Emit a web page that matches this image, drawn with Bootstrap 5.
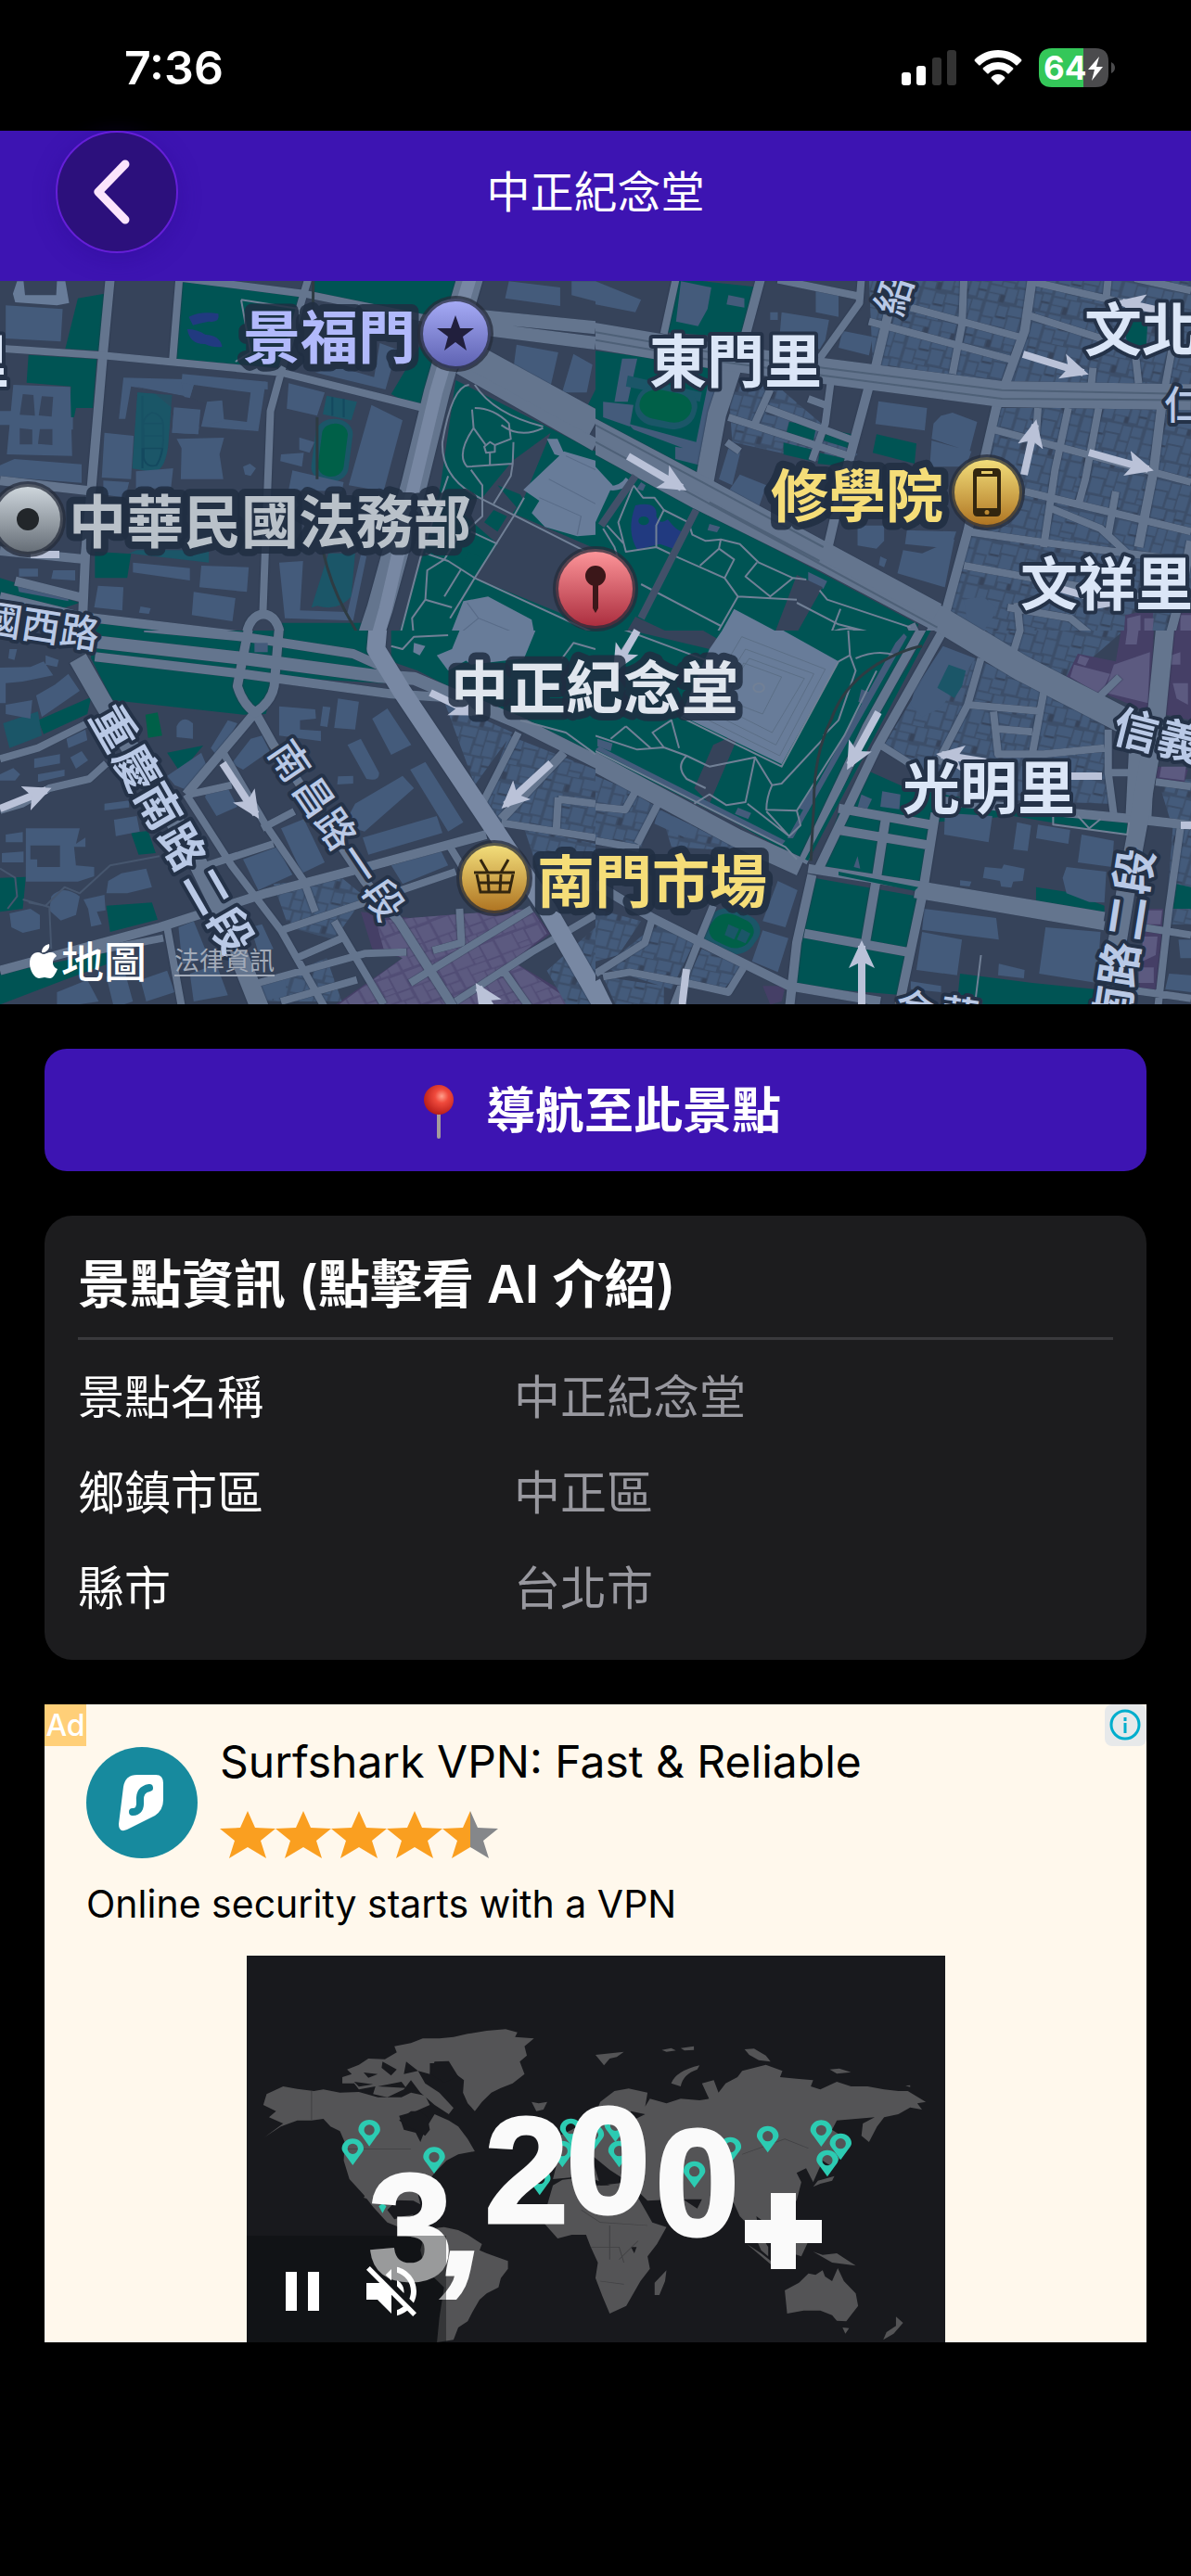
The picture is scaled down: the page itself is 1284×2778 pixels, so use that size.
<!DOCTYPE html>
<html lang="zh-Hant">
<head>
<meta charset="utf-8">
<meta name="viewport" content="width=device-width, initial-scale=1">
<title>中正紀念堂</title>
<link href="https://cdn.jsdelivr.net/npm/bootstrap@5.3.0/dist/css/bootstrap.min.css" rel="stylesheet">
<style>
  body { background: #000; color: #fff; font-family: Inter, "Noto Sans CJK TC", sans-serif; }
  svg { display: block; }
  .statusbar { height: 141px; padding: 0 82px 0 134px; }
  .clock { font-size: 50px; line-height: 60px; font-weight: 600; padding-top: 4px; }
  .status-icons { gap: 18px; padding-top: 4px; }
  .topbar { height: 162px; background: #3d14b2; padding: 0 60px 30px; }
  .topbar-side { width: 132px; }
  .back-btn { width: 132px; height: 132px; border-radius: 50%; background: #2c107c; border: 2px solid #651fd8; padding: 0 8px 0 0; box-shadow: 0 6px 24px rgba(40, 10, 140, .35); }
  .topbar h1 { font-size: 47px; line-height: 60px; font-weight: 400; }
  .map-view { background: #36435a; }
  .map-view > svg { width: 100%; height: auto; }
  .map-credit { position: absolute; left: 32px; bottom: 16px; gap: 30px; }
  .map-brand { font-size: 46px; line-height: 60px; font-weight: 500; gap: 3px; }
  .map-legal { font-size: 27px; line-height: 30px; color: #a3abb9; text-underline-offset: 5px; }
  .map-legal:hover { color: #fff; }
  .land { fill: #36435a; }
  .park { fill: #005454; }
  .pitch { fill: #1b5668; }
  .grass { fill: #006048; }
  .pond { fill: #213a80; }
  .bld { fill: #445b7b; }
  .mon { fill: #687c99; }
  .shop { fill: #453f66; }
  .shopb { fill: #5c5a80; }
  .road, .trail { fill: none; vector-effect: non-scaling-stroke; stroke-linejoin: round; }
  .road { stroke: #64758e; stroke-width: 10px; }
  .r8 { stroke-width: 8px; }
  .r14 { stroke-width: 14px; }
  .r20 { stroke-width: 20px; }
  .r28 { stroke-width: 28px; }
  .ave { stroke: #7888a3; }
  .trail { stroke: #718096; stroke-width: 2px; }
  .seam { stroke: #4e6077; }
  .rail { stroke: #2e3b42; stroke-width: 3px; }
  .net { filter: drop-shadow(0 0 2px #27344a); }
  .arrows path { fill: none; stroke: #bac2d8; stroke-width: 8px; }
  .poi { font-size: 62px; font-weight: 700; font-family: "Noto Sans CJK TC", sans-serif; fill: #dbe6f7; stroke: #243248; stroke-width: 8px; stroke-linejoin: round; paint-order: stroke; }
  .halo { stroke-width: 16px; stroke: #202e42; stroke-opacity: .85; }
  .street { font-size: 42px; font-weight: 500; fill: #b9c9e6; }
  .street-lg { font-size: 48px; fill: #b9c9e6; }
  .content { padding: 48px; gap: 48px; }
  .go-btn { height: 132px; border-radius: 24px; background: #3d14b2; color: #fff; border: 0; font-size: 53px; font-weight: 700; gap: 34px; padding: 3px 0 0 14px; }
  .info-panel { background: #1c1c1e; border-radius: 30px; padding: 36px; height: 479px; }
  .info-panel h2 { font-size: 56px; line-height: 76px; font-weight: 600; margin: 0; padding-bottom: 19px; border-bottom: 3px solid #39393c; }
  .info-list { margin: 11px 0 0; font-size: 50px; line-height: 103px; }
  .info-list dt { font-weight: 400; width: 470px; }
  .info-list dd { margin: 0; color: #98989f; }
  .promo { background: #fff8ec; color: #000; }
  .promo-tag { position: absolute; left: 0; top: 0; width: 45px; height: 45px; background: #ffcf78; color: #fff; font-size: 32px; line-height: 45px; font-weight: 500; text-align: center; }
  .promo-info { position: absolute; right: 0; top: 0; width: 45px; height: 45px; border-radius: 8px; background: #e7e9ea; border: 0; padding: 5px; }
  .promo-head { padding: 34px 45px 0; gap: 24px; }
  .promo-logo { margin-top: 12px; }
  .promo h3 { font-size: 48px; line-height: 56px; font-weight: 400; margin: 0 0 25px; }
  .promo p { font-size: 41px; line-height: 50px; margin: 0; padding: 24px 45px 31px; }
  .video-box { width: 753px; background: #18191d; }
  .video-controls { position: absolute; left: 0; bottom: 0; width: 215px; height: 115px; background: rgba(8, 9, 12, .4); padding: 4px 32px 0 42px; }
  .video-controls button { background: none; border: 0; padding: 0; }
  .digits { font-family: "Liberation Sans", sans-serif; font-weight: 700; font-size: 164px; fill: #fafafa; stroke: #fafafa; stroke-width: 3px; }
</style>
</head>
<body>

<header>
  <div class="statusbar d-flex align-items-center justify-content-between">
    <div class="clock">7:36</div>
    <div class="status-icons d-flex align-items-center">
      <svg width="60" height="38" viewBox="0 0 60 38"><g fill="#fff"><rect x="0" y="24" width="10" height="14" rx="3"/><rect x="16" y="17" width="10" height="21" rx="3"/></g><g fill="#333"><rect x="33" y="8" width="10" height="30" rx="3"/><rect x="49" y="0" width="10" height="38" rx="3"/></g></svg>
      <svg width="52" height="38" viewBox="0 0 52 38" fill="#fff"><path d="M26 0C36 0 45 4 51 10q1 1 0 2l-4 4q-1 1-2 0C40 11 33 8 26 8S12 11 7 16q-1 1-2 0l-4-4q-1-1 0-2C7 4 16 0 26 0z"/><path d="M26 13c7 0 12 3 16 6q1 1 0 2l-4 4q-1 1-2 0c-3-3-6-4-10-4s-7 1-10 4q-1 1-2 0l-4-4q-1-1 0-2c4-3 9-6 16-6z"/><path d="M26 26c3 0 5 1 7 3q1 1 0 2l-6 6q-1 1-2 0l-6-6q-1-1 0-2c2-2 4-3 7-3z"/></svg>
      <svg width="82" height="42" viewBox="0 0 82 42"><path fill="#4b4b4d" d="M48 0h13q14 0 14 14v14q0 14-14 14H48z"/><path fill="#34c759" d="M48 0H14Q0 0 0 14v14q0 14 14 14h34z"/><path fill="#4b4b4d" d="M78 15q4 2 4 6t-4 6z"/><text x="5" y="34" font-family="Inter, sans-serif" font-weight="700" font-size="35" fill="#fff">64</text><path fill="#fff" d="M65 9L53 23h7l-3 12 12-15h-7z"/></svg>
    </div>
  </div>
  <nav class="topbar d-flex align-items-center justify-content-between" aria-label="導覽">
    <div class="topbar-side">
      <button type="button" class="back-btn d-flex align-items-center justify-content-center" aria-label="返回">
        <svg width="48" height="76" viewBox="0 0 48 76"><path d="M37 8L8 38l29 30" fill="none" stroke="#fbe4fc" stroke-width="9" stroke-linecap="round" stroke-linejoin="round"/></svg>
      </button>
    </div>
    <h1 class="m-0">中正紀念堂</h1>
    <div class="topbar-side"></div>
  </nav>
</header>

<section class="map-view position-relative overflow-hidden">
<svg viewBox="0 0 1284 780" role="img" aria-label="地圖">
  <defs>
    <pattern id="houses" width="170" height="150" patternUnits="userSpaceOnUse" patternTransform="rotate(14)">
      <rect width="170" height="150" fill="#3c4e69"/>
      <path class="bld" d="M4 4h32v44H4zM40 8h24v34H40zM68 4h40v28H68zM112 6h22v46h-22zM138 4h26v30h-26zM4 54h26v38H4zM34 48h34v26H34zM72 38h32v48H72zM110 58h24v30h-24zM138 40h28v46h-28zM4 98h40v22H4zM4 124h28v22H4zM34 80h30v14H34zM50 98h26v44H50zM80 94h36v30H80zM84 128h24v18H84zM122 96h20v46h-20zM146 92h20v24h-20zM148 122h18v24h-18z"/>
      <path class="land" d="M36 122h12v24H36zM112 36l0 0zM110 126h10v20h-10zM40 42h24v6H40zM144 116h22v5h-22z"/>
    </pattern>
    <pattern id="shops" width="130" height="120" patternUnits="userSpaceOnUse" patternTransform="rotate(-24)">
      <rect width="130" height="120" fill="#514d75"/>
      <path class="shopb" d="M3 3h48v50H3zM55 3h30v34H55zM90 6h36v48H90zM3 58h26v56H3zM33 58h50v24H33zM56 41h28v13H56zM34 86h32v28H34zM70 88h24v28H70zM90 60h34v24H90zM98 90h28v26H98z"/>
    </pattern>
    <linearGradient id="gViolet" x2="0" y2="1"><stop stop-color="#a8adf8"/><stop offset="1" stop-color="#5c60b0"/></linearGradient>
    <linearGradient id="gGold" x2="0" y2="1"><stop stop-color="#f5e27e"/><stop offset="1" stop-color="#ad711f"/></linearGradient>
    <linearGradient id="gGrey" x2="0" y2="1"><stop stop-color="#d2dae0"/><stop offset="1" stop-color="#626a73"/></linearGradient>
    <linearGradient id="gRed" x2="0" y2="1"><stop stop-color="#ff989c"/><stop offset="1" stop-color="#a92b3c"/></linearGradient>
    <marker id="tip" markerUnits="userSpaceOnUse" markerWidth="32" markerHeight="32" refX="24" refY="16" orient="auto"><path d="M0 2l30 14L0 30l7-14z" style="fill:#bac2d8;stroke:none"/></marker>
  </defs>

  <!-- north-west -->
  <svg x="0" y="-13" width="642" height="400" viewBox="0 0 1568 1200" preserveAspectRatio="none">
    <path class="park" d="M205 95L275 80 262 265 172 258zM75 278L255 292 245 450H200L195 480H182L187 380 70 368zM480 40L800 85 740 320 462 292zM830 30H1205L1190 170 1000 130 820 80zM1105 250L1140 300 1110 460 1030 405zM1200 360L1568 590V1200H1045L1115 920 1160 700zM250 915L345 922 335 1000H250zM0 1000L210 1080 160 1100 0 1060zM215 1140L640 1195V1200H215zM720 1145H970L960 1200H735zM1540 460H1568V390z"/>
    <path class="land" d="M1450 530L1380 740 1350 790 1568 905V1160L1250 1000 1310 890 1190 760 1270 740 1350 620z"/>
    <path class="park" d="M1300 780L1335 800 1310 850 1275 820zM1235 915L1278 940 1250 990 1215 965zM1310 700L1370 730 1400 800 1370 785z"/>
    <path class="pitch" d="M362 400L453 408 442 580Q432 660 400 656L348 646zM860 410L940 430 925 490 850 470zM865 920H935L925 1060Q890 1110 835 1090L820 1096zM360 910H550V950L340 920z"/>
    <path d="M375 410V645M400 465Q372 480 378 520V610Q385 645 412 635 432 600 430 520 432 470 400 465zM378 500H430M378 540H430M378 580H425M875 415V475M905 420V480" fill="none" stroke="#14495f" stroke-width="5"/>
    <rect class="pitch" x="825" y="485" width="98" height="205" rx="48" transform="rotate(6 875 590)"/>
    <rect class="grass" x="842" y="500" width="68" height="172" rx="34" transform="rotate(6 875 590)"/>
    <path class="pond" d="M497 155Q530 135 575 145 580 175 550 170 530 175 508 182zM493 195Q520 195 540 212 580 215 585 252 560 255 540 243 500 245 493 195z"/>
    <path class="bld" d="M15 118L165 130 160 235 15 225zM35 375L185 382 190 605 18 600zM0 460H35V505H0zM170 480H192V520H170zM0 635L38 615 215 632V692L0 672zM325 352L700 364 680 525 530 510 545 440 585 430 580 485 650 495 660 400 510 375 500 415 345 380 330 485 313 485zM480 340L705 365V390L478 368zM458 448L528 455 522 535 453 530zM275 530L352 540 345 680 268 675zM465 550L590 546 578 600 588 680 476 680 478 580zM272 685L340 690 330 740 272 730zM358 655L456 645 450 710H358zM760 370L855 400 835 475 755 452zM978 440L1060 490 1010 720 918 700zM788 545L828 560 815 595 788 585zM740 600L800 595 795 640 738 622zM770 652L905 690 900 720 760 715zM1000 240L1045 260 1015 390 830 335 900 320 985 350zM350 950L500 968V1008L350 982zM530 960L655 965 650 1045 525 1030zM510 1045L620 1065 612 1140 505 1120zM258 1025L325 1030 322 1105 248 1095zM735 950L798 945 790 1105 915 1110 950 925 965 930 930 1138 750 1130zM1340 40L1475 60V120L1330 95zM1505 40H1568V105L1505 85zM1360 245L1470 270 1450 378 1350 340zM1510 275L1560 310 1545 400 1480 400zM640 640L658 630 674 645 660 670 645 665zM50 970H100V995H50zM140 975H198V1008L135 1003zM45 1018L180 1050V1075L50 1045zM370 1092L397 1098 392 1116 366 1112z"/>
    <path class="land" d="M60 405L88 408 92 475 52 472zM110 412L140 414 136 478 102 474zM52 515L85 520V568H52zM105 518H138V570L100 566zM355 380L500 415 545 440 530 510H510L400 395z" fill-opacity=".9"/>
    <path class="pitch" d="M362 400L453 408 442 580H352z" fill-opacity=".6"/>
    <path class="bld" d="M478 368L510 375 500 418 485 414zM458 448L528 455 522 535 453 530zM545 430L585 425 590 490 530 510z"/>
    <path class="mon" d="M45 40H62L66 85H148L150 40H172L182 110 150 118 40 108 34 80zM1485 590L1568 620V860L1520 865 1435 835 1400 790 1420 750 1378 715zM1440 550L1468 550 1490 610 1460 600zM1220 1075L1285 1060 1400 1135 1410 1200H1180z"/>
    <path d="M1490 605L1568 650M1445 680L1568 760M1420 740L1530 800 1520 860M1230 1080L1260 1130 1400 1200M1260 1130L1190 1200" fill="none" stroke="#586b87" stroke-width="3"/>
    <g class="net">
      <path class="road" d="M290 30L270 290 240 720 225 920 215 1200M0 685L235 718M0 912L215 938M40 1010L210 1062M0 1060L215 1125 660 1190 800 1205"/>
      <path class="road r8" d="M472 30L455 290M0 257L270 280 740 335 1115 450M480 30L800 80 1160 170M812 30L795 100 740 335 712 460 692 1120"/>
      <path class="road" d="M648 1200C650 1090 738 1090 738 1200"/>
      <path class="road r14" d="M1240 150L1568 190M1280 195L1568 240"/>
      <path class="road r14" d="M1210 320L1568 570"/>
      <path class="road r28" d="M1240 280L1568 500M1240 20L1150 400 1090 700 1000 1100 965 1230"/>
      <path class="road r14 ave" d="M1240 20L1148 400 1090 700 1015 1100 985 1230"/>
    </g>
    <path class="trail" d="M1235 375Q1190 380 1165 560 1160 680 1270 745L1568 930M1250 450Q1300 450 1340 500L1345 550 1303 570 1290 560 1275 575 1280 595 1303 592 1303 570M1247 515L1278 568M1243 455L1247 515Q1200 600 1230 640L1350 630 1352 560M1290 595V635M1240 650L1270 700V800L1200 880 1170 940 1125 975 1120 1070 1085 1130 1090 1200M1350 630L1345 670 1300 760M1380 740L1355 795 1250 1000 1185 1130M1120 920L1180 945 1250 1000 1568 1180M1180 670L1110 920 1050 1200M1240 850L1310 890M1250 375Q1300 470 1430 510M635 100L660 270 620 300M635 100L790 130M1320 505Q1370 550 1430 515M1215 970L1170 1060M1120 1070L1190 1095"/>
    <path class="trail rail" d="M825 40L822 320M835 480V680M850 910Q870 1020 910 1110L960 1220"/>
  </svg>

  <!-- north-east -->
  <svg x="642" y="-13" width="642" height="400" viewBox="0 0 1568 1200" preserveAspectRatio="none">
    <path fill="url(#houses)" d="M720 30H1568V380L1080 370 730 310zM1070 450H1568V1200H1000L930 1120zM350 380H480L690 600 650 640 360 560z"/>
    <path fill="url(#houses)" d="M1060 450H1568V900H1000z"/>
    <path class="park" d="M212 30L435 60 405 225 185 205zM0 265L355 320 270 680 0 490zM0 590L265 775 590 980 850 1150 840 1200H0zM510 495L582 508 572 565 500 545zM602 515L675 535 665 580 600 555zM495 562L572 585 565 620 495 600zM590 595L662 615 655 640 585 630zM740 535L845 565 840 630 730 595zM1390 180L1455 145 1450 255 1400 240z"/>
    <path class="pond" d="M105 765Q165 750 160 800 170 830 190 810 215 850 230 850L205 905 170 890 110 908Q80 850 105 765z"/>
    <circle class="park" cx="127" cy="815" r="14"/>
    <path class="bld" d="M0 40L120 100 105 140 0 115zM225 40L305 60 295 130 270 185 212 170zM350 85L392 95V125L345 115zM490 140L615 165 605 230 590 260 485 215zM580 70L640 80 640 155 580 140zM745 428L873 450 867 523 737 502zM910 475L940 465 1005 495 985 590 885 550 890 500zM885 555L990 590 975 640H880zM380 665L450 700 430 770 350 720zM690 830H760V880L740 905 690 895zM820 845L950 850 935 905 815 890zM810 910L860 920 945 875 920 1030 795 985zM750 930L767 940 760 965 746 958zM350 580L382 590 360 700 325 680zM460 140H480V165H460zM20 430L100 440 90 510 20 480zM70 290L110 290 85 430 50 430zM85 500L265 560 300 350 330 360 275 600 100 520zM650 200L730 220 720 280 640 255zM210 575L280 590 275 635 210 615zM120 690L132 700 125 718 108 712zM300 825L328 835 320 852 295 845zM560 980L610 1010 600 1035 560 1010zM970 1070L1020 1060 1060 1100 1020 1175 980 1150z"/>
    <path class="pitch" d="M85 345L280 400 275 430 80 380z"/>
    <rect class="pitch" x="105" y="378" width="162" height="136" rx="60" transform="rotate(14 186 446)"/>
    <rect class="grass" x="115" y="396" width="138" height="96" rx="46" transform="rotate(14 186 446)"/>
    <path class="mon" d="M0 640L45 700 0 820zM20 700Q60 710 80 675L95 690Q60 730 20 710zM365 1100L480 1175 470 1210H315z"/>
    <path class="land" d="M530 990L598 1030 520 1200H465zM105 1125L270 1220H60z"/>
    <path class="shop" d="M1395 1120L1470 1100 1460 1200H1390zM1530 1110L1568 1090V1200H1530z"/>
    <path class="shopb" d="M1400 1130L1435 1120V1190H1400zM1445 1130L1470 1130 1465 1190H1445zM1540 1120H1568V1190H1540z"/>
    <g class="net">
      <path class="road r8" d="M212 30L180 210M480 35L700 90M700 30L695 110 590 290M720 170L1100 295M830 125L1130 225M970 30L965 180 940 340M1145 40L1568 160M1350 30L1345 90M1140 150L1420 260 1430 370M1310 320L1305 380M1530 180L1500 380M1245 450L1210 650 1180 900M1325 450L1290 680 1270 770M1165 450L1160 540M1050 520L1568 690M1130 720L1568 850M1190 770L1330 840 1400 920M1370 720L1350 860M980 850L1150 880 1400 920 1568 945M970 960L1150 1000 1568 1090M1085 1095L1250 1130 1320 1200M620 360L605 500 570 620M450 450L690 560M350 480L680 610M460 390L420 500M560 420L605 440M345 560L380 590M1420 30L1568 70M1110 1080L1120 1200M1450 920L1440 1080"/>
      <path class="road" d="M435 30L385 260M770 150L735 330 720 380 650 700 612 900M1150 30L1130 200 1080 370 1055 450 980 850 920 1120M1490 450L1470 650 1430 900M830 1150L850 1200M900 1140L870 1200M1568 880L1540 1060 1510 1200"/>
      <path class="road r20" d="M360 320L320 470 285 700"/>
      <path class="road r28" d="M-10 215L330 285 600 330 1070 405 1568 415M-20 540L270 735 600 935 900 1130 1010 1210"/>
      <path class="road r20" d="M-20 505L280 700 900 1110"/>
    </g>
    <path class="trail seam" d="M0 205L330 275 600 320 1070 392 1568 405M0 230L330 300 600 345 1070 420 1568 425M0 505L600 900M0 560L600 960 900 1160M300 755L590 945"/>
    <path class="trail" d="M100 700L60 820 80 915 160 900 220 935 340 1000 375 1060 530 1070M100 700L125 740 155 740 180 780 245 820 255 860 290 880 330 875 380 890 430 950 520 1000 555 1005M180 780L160 830V900M330 875L325 905 275 960M325 905L365 940 340 1000M425 950L395 995 460 1060 520 1000M375 1060L310 1200M120 1020L330 1155M20 840L50 900 60 940M30 830L75 890M530 1080L640 1150 800 1200M645 1100L620 1180M590 1040L610 1070 830 1160M590 1200Q640 1150 690 1170L740 1200"/>
    <path class="road r8" style="stroke:#425069" d="M265 780L120 1130M105 670L15 830"/>
  </svg>

  <!-- south-west -->
  <svg x="0" y="377" width="642" height="410" viewBox="0 0 1568 1230" preserveAspectRatio="none">
    <rect class="land" width="1568" height="1230"/>
    <path class="park" d="M240 -10H980L1010 170 725 150 700 270 640 272 295 225 240 90zM1030 -10H1568V400L1370 300 1100 130 1030 100zM100 290L240 215 230 270 115 335zM440 395L535 372 475 460zM345 655L390 648 410 720 365 725zM280 890L400 880 415 935 290 975zM0 800L68 797 60 900 0 910zM0 1110L280 1040V1080L160 1135 0 1210z"/>
    <path class="shop" d="M950 910L1080 930 1400 900 1450 980 1350 1070 1568 1230H860L1060 1060 980 1030z"/>
    <path fill="url(#shops)" d="M990 940L1080 930 1400 900 1440 980 1350 1070 1540 1230H870L1060 1060 1010 1030z"/>
    <path fill="url(#houses)" d="M1340 340L1568 450V680L1320 620 1270 560zM1170 230L1350 330 1250 500zM720 820L900 800 960 860 880 1000 760 960zM1380 640L1568 690V900L1440 860zM680 1150L860 1060 900 1200H700zM1500 1230L1440 1100 1568 960V1230z"/>
    <path class="grass" d="M383 272L415 265 427 340 390 347z"/>
    <path class="pitch" d="M8 300L100 262 110 340 25 380z"/>
    <path class="bld" d="M0 120L80 118 115 100 140 145 60 165 15 170V235H0zM120 80L155 95 150 118 120 110zM95 210L145 175 180 140 210 195 110 280zM15 240L85 225 80 285 15 270zM90 415L158 400V430L90 445zM100 465L170 450V470L100 490zM175 350L225 320 230 355 180 380zM185 410L215 390 232 420 200 447zM0 465L35 445 53 465 40 485H0zM275 560L340 550V572L275 582zM300 612L360 600 368 650 305 665zM68 640H210L200 690 225 670V700H195L200 760 248 765V795L205 812H180L68 812zM15 660L60 652V685H15zM5 720L62 715V750H5zM320 785L385 770 400 830 335 850 280 850 285 810zM135 860Q165 820 210 860L200 920 160 938 130 905zM25 915L80 900 105 920V965L60 978 30 960zM220 870L275 855 278 905 255 910 268 950 240 958 232 900zM465 310Q480 270 508 300V350L465 345zM555 380L600 290 625 300 575 410zM735 245L830 255 832 285 790 290 790 320 845 325V358L735 340zM890 220L945 230 935 320 880 315zM850 245L870 248 862 312 843 308zM980 285L1020 252 1083 370 1030 402zM915 370L950 350 998 460Q1000 490 965 480zM935 560L1060 470 1090 510 960 650 905 630zM1080 450L1120 425 1220 620 1180 650zM955 670L1150 600 1165 655 970 725zM740 640L800 610 855 750 795 785zM890 472L930 470V495L888 498zM610 430L660 350 690 340 710 390 640 450zM545 510L600 510 625 570 570 600 540 540zM440 470L530 395 545 440 500 520 460 500zM370 1130L440 1100 460 1170 385 1200zM150 1170L230 1130 260 1200 150 1220zM470 960L510 940 550 1060 480 1080zM500 1110L570 1080 600 1180 510 1200zM660 960L690 950 720 1030 680 1040zM280 1120L330 1110 350 1200 300 1220zM640 740L730 700 770 790 680 840zM1030 760L1160 710 1180 760 1060 820zM670 1130L750 1120 755 1180 690 1200zM25 60L45 60 38 95 22 90z"/>
    <path class="land" d="M80 695H158V765H98V740H80z"/>
    <path class="mon" d="M1210 0H1410L1380 90 1240 110 1190 60zM1150 80L1200 55 1230 95 1180 130zM1090 40L1120 50 1105 80 1088 70z"/>
    <g class="net">
      <path class="road r8" d="M0 415L100 380 230 300M0 582L60 560 130 510 235 480 280 430M490 530L610 760 740 970 860 1230M500 530L610 500M590 400L700 630 800 810 830 910M440 960L480 1230M215 1045L430 995M520 770L720 690M690 640L775 585M740 970L960 880 1200 780M780 1060L910 990M680 1140L960 1045 1070 1040M740 1200L940 1130M880 940L1010 1210M1320 622L1568 670M1365 330L1270 560M1180 690L1240 810M1568 920L1400 1040 1200 1200M1080 1140L1400 900M1320 1090L1400 1230M1470 540L1465 640M1470 545L1568 560M1140 1035L1215 1010 1210 900"/>
      <path class="road" d="M0 1100L420 960 700 850 980 760 1280 660M672 265L490 530M672 265L720 370 960 810 1050 940 1200 1230M1485 395L1320 610"/>
      <path class="road" d="M655 -10L625 180Q640 240 672 265 715 230 722 180L735 -10M380 -10L640 20 930 75 1030 130M250 85L640 140 1030 205 1160 215"/>
      <path class="road r14" d="M240 35L640 90 1000 148 1090 155 1360 295 1580 430"/>
      <path class="road r20" d="M205 90L270 230 500 700 580 900 690 1240"/>
      <path class="road r20 ave" d="M995 -10L990 60 1060 200 1300 640 1440 900 1580 1200"/>
    </g>
    <path class="trail" style="stroke:#46566e" d="M60 870L130 895 135 1030M75 880L120 890 170 830 210 850 290 760 420 730M0 770L40 800 45 860 20 900"/>
    <path class="trail" d="M1030 50L1060 60 1090 20 1180 15M1480 90L1510 40 1568 60M1370 290L1490 330 1568 400"/>
    <path class="bld" d="M670 40H705V70H670z"/>
  </svg>

  <!-- south-east -->
  <svg x="642" y="377" width="642" height="410" viewBox="0 0 1568 1230" preserveAspectRatio="none">
    <rect class="land" width="1568" height="1230"/>
    <path fill="url(#houses)" d="M1020 -10H1400L1240 160 1340 310 1350 560 900 540 760 370 880 130 1000 90 1180 190zM1110 -10L1390 -10 1250 130zM0 470L80 510 160 570 120 700 0 680zM170 580L370 700 340 710 200 700zM0 900L120 940 60 1050 0 1070zM160 950L260 1010 200 1160 20 1090zM280 1030L390 1090 330 1170 240 1130zM20 1120L180 1150V1230H60zM1480 480H1568V950H1500L1520 640z"/>
    <path class="shop" d="M1385 -10H1470L1465 270 1240 150 1270 75 1370 100zM1520 -10H1568V290L1495 270zM1480 440L1560 450 1550 495 1475 480zM1450 900H1495L1480 1180H1430zM440 1150L500 1150 490 1200 460 1210z"/>
    <path class="shopb" d="M1400 0H1430L1425 45H1395zM1275 80L1300 90 1290 115 1268 105zM1260 110L1355 140 1330 210 1250 150zM1365 110L1460 70 1455 235 1340 200zM1515 80L1540 70V110H1515zM1520 170H1560V240L1530 220zM1490 440H1555L1550 485 1485 475zM1455 905H1492L1488 950H1450zM1440 990L1480 990 1475 1050 1440 1070zM1430 1090H1470V1140H1430z"/>
    <path class="park" d="M0 -10H860L790 200 540 740 350 610 0 400zM720 455L820 510 1200 590 1400 620V662L1100 600 890 620 650 580zM640 590L890 620 860 820 590 770zM575 800L850 860 810 1180 520 1150zM1160 830L1240 845 1340 890V915L1160 880zM870 845L1340 905 1330 925 880 860zM960 1110L1150 1140 1350 1165 1340 1230H950zM1530 820L1568 830V900H1520z"/>
    <path class="land" d="M60 -10H270L380 70 300 60zM310 370L380 330 300 560 260 510z"/>
    <path class="mon" d="M375 -75L480 -10 640 100 490 432 225 275 300 60z"/>
    <path class="bld" d="M915 50L1000 90 910 250 860 280 830 240 840 190zM920 590L1045 600 1035 685 918 660zM1110 620L1147 630 1138 713 1100 708zM1165 628L1250 645 1245 690 1160 672zM1280 660L1365 680 1360 765 1270 750zM1025 765L1070 770 1075 757 1130 770 1125 810 1100 812 1095 832 1068 828 1065 810 1020 800zM1240 765L1345 780 1340 880 1300 878 1240 850 1230 800zM865 900L1055 930 1062 1000 860 968zM860 975L965 1000 952 1115 845 1098zM1185 960L1330 975 1320 1140 1168 1110zM1062 1078L1130 1098 1128 1125 1060 1115zM480 810L532 840 500 960 440 940zM440 970L508 995 480 1105 412 1070zM165 580L255 630 235 670 155 625zM755 520L803 530 800 578 750 570zM700 530L728 545 715 578 690 572zM1535 1000H1568V1060H1540zM1510 1110L1568 1115V1170L1500 1160zM700 190L722 200 705 238 692 230zM375 573L410 590 402 610 367 593zM830 1135L910 1150V1170L830 1160zM960 808L990 812 985 828 960 825zM5 350L45 365 40 390 5 375zM570 510L585 515 560 585 535 575zM690 730L697 770 680 765z"/>
    <path class="pitch" d="M930 110L975 130 965 180 945 218 900 185z"/>
    <rect class="pitch" x="285" y="905" width="145" height="135" rx="55" transform="rotate(30 357 972)"/>
    <rect class="grass" x="300" y="922" width="115" height="98" rx="42" transform="rotate(30 357 972)"/>
    <path class="pitch" d="M350 950L378 965 365 1000 340 985zM385 965L408 980 395 1012 372 1000z"/>
    <g fill="none" stroke="#57697f" stroke-width="2"><path d="M385 20L605 125 485 405 265 270zM395 60L575 140 475 370 295 260zM405 90L550 155 465 330 320 240zM390 105L490 150 440 270 345 225z"/></g>
    <circle class="trail" cx="430" cy="185" r="14"/>
    <g class="net">
      <path class="road r8" d="M1015 90L980 240 900 430M1180 200L1150 400M750 370L840 440M980 240L1180 262M1048 262L1060 400 1180 400 1340 380M1060 318L1150 328M1350 320L1350 460 1365 600M1350 460L1430 460M1475 490L1568 505M165 560L110 690M0 680L115 705M310 890L270 1010 200 1230M0 570L78 580 110 510M0 1110L130 1010 150 930M20 1120L90 1105 240 1140 350 1170 390 1090M1540 640L1510 900 1480 1230M1380 150L1330 210M1120 -10L1100 70M1440 960L1568 985M1420 1165L1568 1190"/>
      <path class="road" d="M640 575L890 630M640 645L880 695M765 600L740 800 710 1015M895 590L860 860 800 1210M550 980L820 1040M570 790L530 1010 510 1230M0 820L150 930 280 1010 510 1150 750 1200M900 550L1160 580 1420 610 1568 630"/>
      <path class="road" d="M870 -30L715 310 545 750M915 0L740 380 590 765M560 770L850 825 1340 925M840 850L1340 955"/>
      <path class="road r20" d="M-10 420L370 670 540 765"/>
      <path class="road r28" d="M890 -50L1120 120 1420 310M1440 350L1430 600"/>
      <path class="road r20" d="M1500 -10L1475 300 1430 620 1395 850 1375 1000 1330 1240"/>
      <path class="road ave r20" d="M-10 1140L30 1240"/>
    </g>
    <path class="park" d="M640 780L850 830 840 842 640 792zM875 -10L885 -5 560 745 552 740z"/>
    <path class="bld" d="M0 385L10 375 500 680 490 695zM520 672L820 20 812 10 790 40 505 672z"/>
    <path class="trail" d="M665 -10L670 80 640 100 490 440 390 380 225 280M670 80L685 130 640 290 600 340M685 90Q740 60 790 80M600 350L490 495 465 500 420 410M465 500Q450 540 450 580L530 583 655 340 740 130M530 583L540 630 510 665 450 585M0 340L110 385 180 378 240 405 300 440 420 410 395 555 345 565 300 530 260 560M180 378L150 330 200 290 220 380M80 310L40 350M80 310L145 380M240 405Q210 440 240 480L290 510M400 560L510 665M0 390L500 700 530 740M110 -10L60 80M60 -10L300 100"/>
    <path class="trail rail" d="M860 50Q810 60 740 110 650 180 620 290 575 400 575 560L567 745"/>
    <path class="trail" d="M1205 600V628L1400 660 1405 620M1270 600L1300 640 1330 610M1015 1050L1000 1200"/>
  </svg>

  <g class="arrows">
    <path marker-end="url(#tip)" d="M677 189L735 223"/><path marker-end="url(#tip)" d="M1103 79L1168 99"/><path marker-end="url(#tip)" d="M1104 209L1116 155"/><path marker-end="url(#tip)" d="M1174 185L1238 203"/><path marker-end="url(#tip)" d="M1250 32L1210 23"/>
    <path marker-end="url(#tip)" d="M0 569L50 549"/><path marker-end="url(#tip)" d="M240 520L276 575"/><path marker-end="url(#tip)" d="M594 520L545 565"/><path marker-end="url(#tip)" d="M530 784L516 762"/><path marker-end="url(#tip)" d="M947 465L916 522"/>
    <path marker-end="url(#tip)" d="M1064 519L1015 511"/><path marker-end="url(#tip)" d="M929 784V717"/><path marker-end="url(#tip)" d="M687 377L664 417"/><path marker-end="url(#tip)" d="M464 444L510 466"/><path marker-end="url(#tip)" d="M1140 331L1200 348"/><path d="M735 784L740 742M1150 534H1188M1273 587H1284M33 295H64"/>
  </g>

  <g class="poi">
    <text x="-52" y="110">里</text>
    <text x="700" y="110">東門里</text>
    <text x="1169" y="76">文北</text>
    <text x="1100" y="350">文祥里</text>
    <text x="973" y="570">光明里</text>
    <g class="halo">
      <text x="262" y="84" style="fill:#b1b9fb">景福門</text>
      <text x="831" y="255" style="fill:#f5dd78">修學院</text>
      <text x="74" y="283" style="fill:#b9c1c9">中華民國法務部</text>
      <text x="641" y="462" text-anchor="middle" style="fill:#e0e6ee">中正紀念堂</text>
      <text x="579" y="671" style="fill:#f5dd78">南門市場</text>
    </g>
  </g>
  <g class="poi" text-anchor="middle">
    <g class="street-lg">
      <g transform="translate(123 482) rotate(60)"><text x="0 50 97 148 202 252" y="18">重慶南路二段</text></g>
      <g transform="translate(1199 784) rotate(-81)"><text x="0 48 99 149" y="18">南路二段</text></g>
      <g transform="translate(1225 484) rotate(14)"><text x="0 49" y="18">信義</text></g>
    </g>
    <g class="street">
      <g transform="translate(313 517) rotate(56)"><text x="0 47 89 134 181" y="16">南昌路一段</text></g>
      <g transform="translate(3 365) rotate(9)"><text x="0 42 84" y="16">國西路</text></g>
      <g transform="translate(963 15) rotate(-72)"><text y="16">紹</text></g>
      <text x="1276" y="149">仁</text>
      <g transform="translate(987 784) rotate(8)"><text x="0 48" y="16">金華</text></g>
    </g>
  </g>

  <g stroke="#252c3b" stroke-opacity=".75" stroke-width="6">
    <circle cx="491" cy="57" r="38" fill="url(#gViolet)"/>
    <circle cx="1064" cy="228" r="38" fill="url(#gGold)"/>
    <circle cx="30" cy="257" r="38" fill="url(#gGrey)"/>
    <circle cx="533" cy="644" r="38" fill="url(#gGold)"/>
    <circle cx="642" cy="332" r="43" fill="url(#gRed)"/>
  </g>
  <path fill="#211f3d" d="M491 37l5 14h15l-12 9 4 15-12-9-12 9 4-15-12-9h15z"/>
  <path fill="#33260f" fill-rule="evenodd" d="M1054 202h20q5 0 5 5v42q0 5-5 5h-20q-5 0-5-5v-42q0-5 5-5zm-1 9v34h22v-34zm5-6v3h12v-3zm6 42a2.500 2.500 0 1 0 0 5 2.500 2.500 0 0 0 0-5z"/>
  <circle cx="30" cy="257" r="12" fill="#22262a"/>
  <circle cx="642" cy="318" r="11" fill="#3b1719"/><path fill="#3b1719" d="M639 326h6v27l-3 5-3-5z"/>
  <g fill="none" stroke="#33260f" stroke-width="3"><path d="M511 638h44M514 640l4 19h31l4-19M516 649h34M526 640l1 18M540 640l-1 18M518 624l8 14M548 624l-8 14"/></g>
</svg>
<div class="map-credit d-flex align-items-center">
  <div class="map-brand d-flex align-items-center">
    <svg width="31" height="38" viewBox="0 0 31 38" fill="#fff"><path d="M21 0q1 4-2 7t-6 2q0-7 8-9z"/><path d="M15 11c3 0 4-2 8-2 3 0 5 2 6 4-6 4-5 12 1 14-2 5-5 10-8 10s-4-1-6-1-4 1-6 1C5 37 0 28 0 21 0 13 4 9 9 9c3 0 4 2 6 2z"/></svg>
    <span>地圖</span>
  </div>
  <a class="map-legal" href="#legal">法律資訊</a>
</div>
</section>

<main class="content d-flex flex-column">
  <button type="button" class="go-btn btn w-100 d-flex align-items-center justify-content-center">
    <svg width="34" height="60" viewBox="0 0 34 60"><defs><radialGradient id="ball" cx=".6" cy=".38" r=".65"><stop stop-color="#ffa08c"/><stop offset=".35" stop-color="#f04a3c"/><stop offset="1" stop-color="#b51b18"/></radialGradient></defs><rect x="15" y="28" width="4" height="31" rx="2" fill="#a59a9c"/><circle cx="17" cy="17" r="16" fill="url(#ball)"/></svg>
    <span>導航至此景點</span>
  </button>

  <section class="info-panel">
    <h2>景點資訊 (點擊看 AI 介紹)</h2>
    <dl class="info-list">
      <div class="d-flex"><dt>景點名稱</dt><dd>中正紀念堂</dd></div>
      <div class="d-flex"><dt>鄉鎮市區</dt><dd>中正區</dd></div>
      <div class="d-flex"><dt>縣市</dt><dd>台北市</dd></div>
    </dl>
  </section>

  <section class="promo position-relative">
    <span class="promo-tag">Ad</span>
    <button type="button" class="promo-info" aria-label="廣告資訊"><svg width="35" height="35" viewBox="0 0 35 35"><circle cx="17" cy="17" r="15" fill="none" stroke="#00aecd" stroke-width="3"/><path d="M17 15v11M17 9v4" stroke="#00aecd" stroke-width="3"/></svg></button>
    <div class="promo-head d-flex align-items-start">
      <svg class="promo-logo flex-shrink-0" width="120" height="120" viewBox="0 0 120 120"><circle cx="60" cy="60" r="60" fill="#178a9e"/><path fill="#fff" d="M55 30h20q8 0 8 9v18q0 11-9 17L44 89q-9 4-9-6l5-40q2-13 15-13z"/><path fill="none" stroke="#178a9e" stroke-width="8" stroke-linecap="round" d="M68 44q-11 2-10 14t-8 12"/></svg>
      <div>
        <h3>Surfshark VPN: Fast &amp; Reliable</h3>
        <svg width="300" height="51" viewBox="0 0 300 51" role="img" aria-label="4.5"><defs><path id="star" d="M30 0l8 18 22 1-16 13 6 19-20-12-20 12 6-19L0 19l22-1z"/></defs><g fill="#fa9f20"><use href="#star"/><use href="#star" x="60"/><use href="#star" x="120"/><use href="#star" x="180"/></g><path fill="#fa9f20" d="M270 0v39l-20 12 6-19-16-13 22-1z"/><path fill="#85878a" d="M270 0l8 18 22 1-16 13 6 19-20-12z"/></svg>
      </div>
    </div>
    <p>Online security starts with a VPN</p>
    <div class="video-box position-relative mx-auto">
      <svg class="w-100 h-auto" viewBox="0 0 753 417" role="img" aria-label="3,200+">
        <svg width="753" height="417" viewBox="53 57 1476 1251" preserveAspectRatio="none">
          <g fill="#545456">
            <path d="M95 505L130 480 160 488 195 495 215 490 250 500 290 498 330 515 380 515 400 500 430 510 440 540 410 560 375 575 385 620 410 630 420 660 430 620 450 570 480 590 500 610 520 650 535 690 500 700 475 720 450 760 430 800 415 830 420 862 405 850 370 848 350 880 365 910 385 900 405 895 390 930 430 950 450 960 400 950 350 920 320 870 300 830 270 780 258 720 260 660 250 625 230 610 215 585 190 590 160 590 125 610 90 645 130 600 100 580 115 560 88 540z"/>
            <path d="M255 450L275 440 265 425 290 410 310 390 345 392 370 370 365 350 400 340 425 325 460 325 490 320 520 310 560 300 600 295 625 305 620 320 660 325 640 350 645 380 630 400 640 440 615 470 590 485 570 500 550 530 535 560 520 535 510 500 512 460 495 440 480 405 440 405 440 440 415 430 430 470 460 500 490 550 480 570 450 540 420 500 400 460 385 490 350 515 320 505 325 480 290 490 280 470 255 470z"/>
            <path d="M430 950L445 940 470 935 500 945 520 960 550 990 545 1010 560 1020 605 1045 605 1070 590 1100 585 1130 560 1150 545 1170 530 1210 520 1240 500 1260 490 1300 455 1308 460 1230 470 1130 430 1070 420 1010z"/>
            <path d="M655 530L670 535 688 530 680 555 665 560zM790 378L850 368 835 385 820 390 808 412zM950 470Q960 430 1010 412L1005 425Q975 440 970 480zM1105 360L1125 358 1150 380 1160 400 1135 395 1115 378zM930 362l20-6 10 8-20 4zM970 356l28-6v12l-20 2zM1285 425l20-3 25 12-30 5zM1445 478l10-2v6z"/>
            <path d="M700 780L710 720 720 680 700 650 740 620 790 570 800 530 830 495 860 487 900 500 895 545 905 520 940 535 970 520 1010 525 1030 520 1015 470 1040 460 1050 500 1065 470 1090 450 1100 430 1150 410 1185 430 1180 450 1215 455 1250 460 1245 480 1265 490 1300 465 1330 480 1365 480 1400 490 1430 495 1450 495 1488 530 1470 535 1480 555 1455 548 1430 570 1400 580 1385 610 1368 660 1352 640 1355 600 1380 580 1340 585 1300 590 1290 620 1320 650 1320 690 1290 740 1270 720 1250 790 1235 745 1215 760 1225 790 1215 850 1180 880 1185 910 1165 940 1130 900 1135 950 1155 1000 1155 1030 1140 1010 1120 940 1095 900 1080 850 1050 860 1030 890 1015 960 990 930 975 880 960 845 900 850 880 820 820 800 770 770z"/>
            <path d="M700 800L720 782 760 775 780 800 830 800 880 840 895 880 910 920 940 935 920 990 900 1030 905 1070 885 1110 855 1190 820 1215 805 1160 790 1100 795 1050 780 1000 770 960 740 960 710 972 680 920 685 880zM940 1075L937 1110 925 1155 915 1155 915 1115zM1190 1140L1220 1115 1240 1085 1255 1090 1270 1075 1275 1095 1290 1110 1302 1068 1315 1110 1340 1150 1345 1190 1320 1240 1300 1238 1290 1220 1265 1205 1230 1205 1195 1215zM1312 1260L1326 1262 1318 1280zM1425 1225L1440 1245 1420 1280 1398 1300 1405 1275 1425 1255zM1250 1015L1270 1025 1300 1020 1330 1050 1340 1060 1290 1050zM1195 980L1220 960 1240 980 1225 1030 1205 1020zM1110 990L1140 1020 1165 1050 1210 1065 1160 1055zM1295 770L1290 785 1265 795 1250 805 1260 785zM310 820L320 850 300 840z"/>
          </g>
          <g fill="#18191d"><path d="M375 590L400 560 420 560 435 580 440 620 430 640 415 625 400 615 385 600zM280 465l40 8-30 8zM340 400l30 25-12 20-20-25zM300 435l30 5-20 12zM390 400l25 30-30 10zM330 480l50-15 10 20zM450 400l30-2 20 50-30 20-30-30zM780 700l40 50 40 40-60 10zM865 560l30 10-40 30zM975 845h40l-10 30zM865 1000h12l-5 20z"/></g>
          <path d="M190 495V590M260 682H400M1100 700L1190 650 1240 680M820 930V1040M840 1040L880 980M800 1110L850 1120M760 880L800 920 900 930M780 1000H840L850 1050" fill="none" stroke="#404043" stroke-width="2"/>
          <defs><path id="drop" fill-rule="evenodd" fill="#2ccbb2" d="M0 0L-16-34Q-23-46-23-54A23 32 0 0 1 23-54Q23-46 16-34zM0-70a11 17 0 1 0 0 34a11 17 0 0 0 0-34z"/></defs>
          <use href="#drop" x="312" y="674"/><use href="#drop" x="277" y="735"/><use href="#drop" x="449" y="762"/><use href="#drop" x="738" y="670"/><use href="#drop" x="720" y="742"/><use href="#drop" x="785" y="690"/><use href="#drop" x="840" y="742"/><use href="#drop" x="672" y="832"/><use href="#drop" x="832" y="660"/><use href="#drop" x="1075" y="730"/><use href="#drop" x="999" y="808"/><use href="#drop" x="1154" y="694"/><use href="#drop" x="1267" y="675"/><use href="#drop" x="1308" y="718"/><use href="#drop" x="1280" y="772"/><path fill="#2ccbb2" d="M332 868q8-15 16 0l-8 22z"/>
        </svg>
        <g class="digits"><text x="131" y="349">3</text><text x="256" y="288">2</text><text x="344" y="277">0</text><text x="440" y="301">0</text><text x="212" y="344" font-style="italic">,</text></g>
        <path fill="#fafafa" d="M565 256h27v29h28v25h-28v28h-27v-28h-28v-25h28z"/>
      </svg>
      <div class="video-controls d-flex align-items-center justify-content-between">
        <button type="button" aria-label="暫停"><svg width="36" height="42" viewBox="0 0 36 42" fill="#fff"><path d="M0 0h12v42H0zM24 0h12v42H24z"/></svg></button>
        <button type="button" aria-label="取消靜音"><svg width="54" height="54" viewBox="3 3 18 18" fill="#fff"><path d="M16.500 12c0-1.770-1.020-3.290-2.500-4.030v2.210l2.450 2.450c.03-.2.050-.41.050-.63zm2.500 0c0 .94-.2 1.820-.54 2.640l1.510 1.510C20.630 14.910 21 13.500 21 12c0-4.280-2.990-7.860-7-8.770v2.060c2.890.86 5 3.540 5 6.710zM4.270 3L3 4.270 7.730 9H3v6h4l5 5v-6.730l4.250 4.250c-.67.52-1.420.93-2.250 1.180v2.060c1.380-.31 2.630-.95 3.690-1.810L19.730 21 21 19.730l-9-9L4.270 3zM12 4L9.910 6.090 12 8.180V4z"/></svg></button>
      </div>
    </div>
  </section>
</main>
<script src="https://cdn.jsdelivr.net/npm/bootstrap@5.3.0/dist/js/bootstrap.bundle.min.js"></script>
</body>
</html>
